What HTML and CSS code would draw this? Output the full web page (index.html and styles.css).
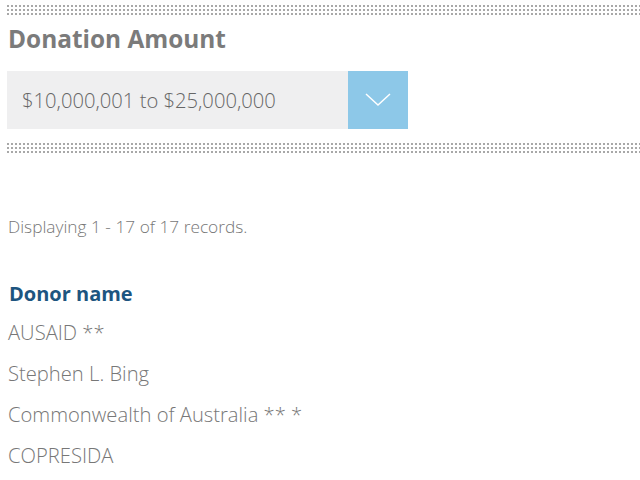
FILE: index.html
```html
<!DOCTYPE html>
<html>
<head>
<meta charset="utf-8">
<link rel="stylesheet" href="styles.css">
</head>
<body>
<div class="page">
  <div class="dots"></div>
  <h2 class="filter-title">Donation Amount</h2>
  <div class="select">
    <span class="select-value">$10,000,001 to $25,000,000</span>
    <span class="select-btn">
      <svg width="26" height="14" viewBox="0 0 26 14"><path d="M1 1 L13 12 L25 1" fill="none" stroke="#fff" stroke-width="1.5"/></svg>
    </span>
  </div>
  <div class="dots dots-bottom"></div>
  <p class="summary">Displaying 1 - 17 of 17 records.</p>
  <h3 class="col-head">Donor name</h3>
  <ul class="donors">
    <li>AUSAID **</li>
    <li>Stephen L. Bing</li>
    <li>Commonwealth of Australia ** *</li>
    <li>COPRESIDA</li>
  </ul>
</div>
</body>
</html>
```

FILE: styles.css
```css
html, body {
  margin: 0;
  padding: 0;
  background: #fff;
}
body {
  font-family: "Open Sans", "Liberation Sans", sans-serif;
  color: #777;
  width: 640px;
  height: 480px;
  overflow: hidden;
}
.page {
  padding: 5px 0 0 7px;
}
.dots {
  height: 12px;
  background-image: radial-gradient(circle at 1px 1px, #a8a8a8 0.9px, transparent 1.1px);
  background-size: 4px 4px;
  background-position: 0 0;
}
.filter-title {
  margin: 7px 0 0 1px;
  font-size: 24.4px;
  font-weight: 700;
  color: #7b7b7b;
  line-height: 30px;
}
.select {
  margin-top: 17px;
  width: 401px;
  height: 58px;
  display: flex;
  background: #efeff0;
}
.select-value {
  flex: 1;
  padding-left: 15px;
  font-size: 20.2px;
  font-weight: 300;
  line-height: 58px;
  color: #666;
}
.select-btn {
  width: 60px;
  background: #8dc8e8;
  display: flex;
  align-items: center;
  justify-content: center;
}
.dots-bottom {
  margin-top: 14px;
}
.summary {
  margin: 61px 0 0 1px;
  font-size: 17.3px;
  font-weight: 300;
  line-height: 22px;
  color: #777;
}
.col-head {
  margin: 43px 0 0 2px;
  font-size: 20px;
  font-weight: 700;
  color: #1d5580;
  line-height: 26px;
}
.donors {
  list-style: none;
  margin: 5px 0 0 1px;
  padding: 0;
}
.donors li {
  font-size: 20.2px;
  font-weight: 300;
  line-height: 41px;
  color: #777;
}
```
